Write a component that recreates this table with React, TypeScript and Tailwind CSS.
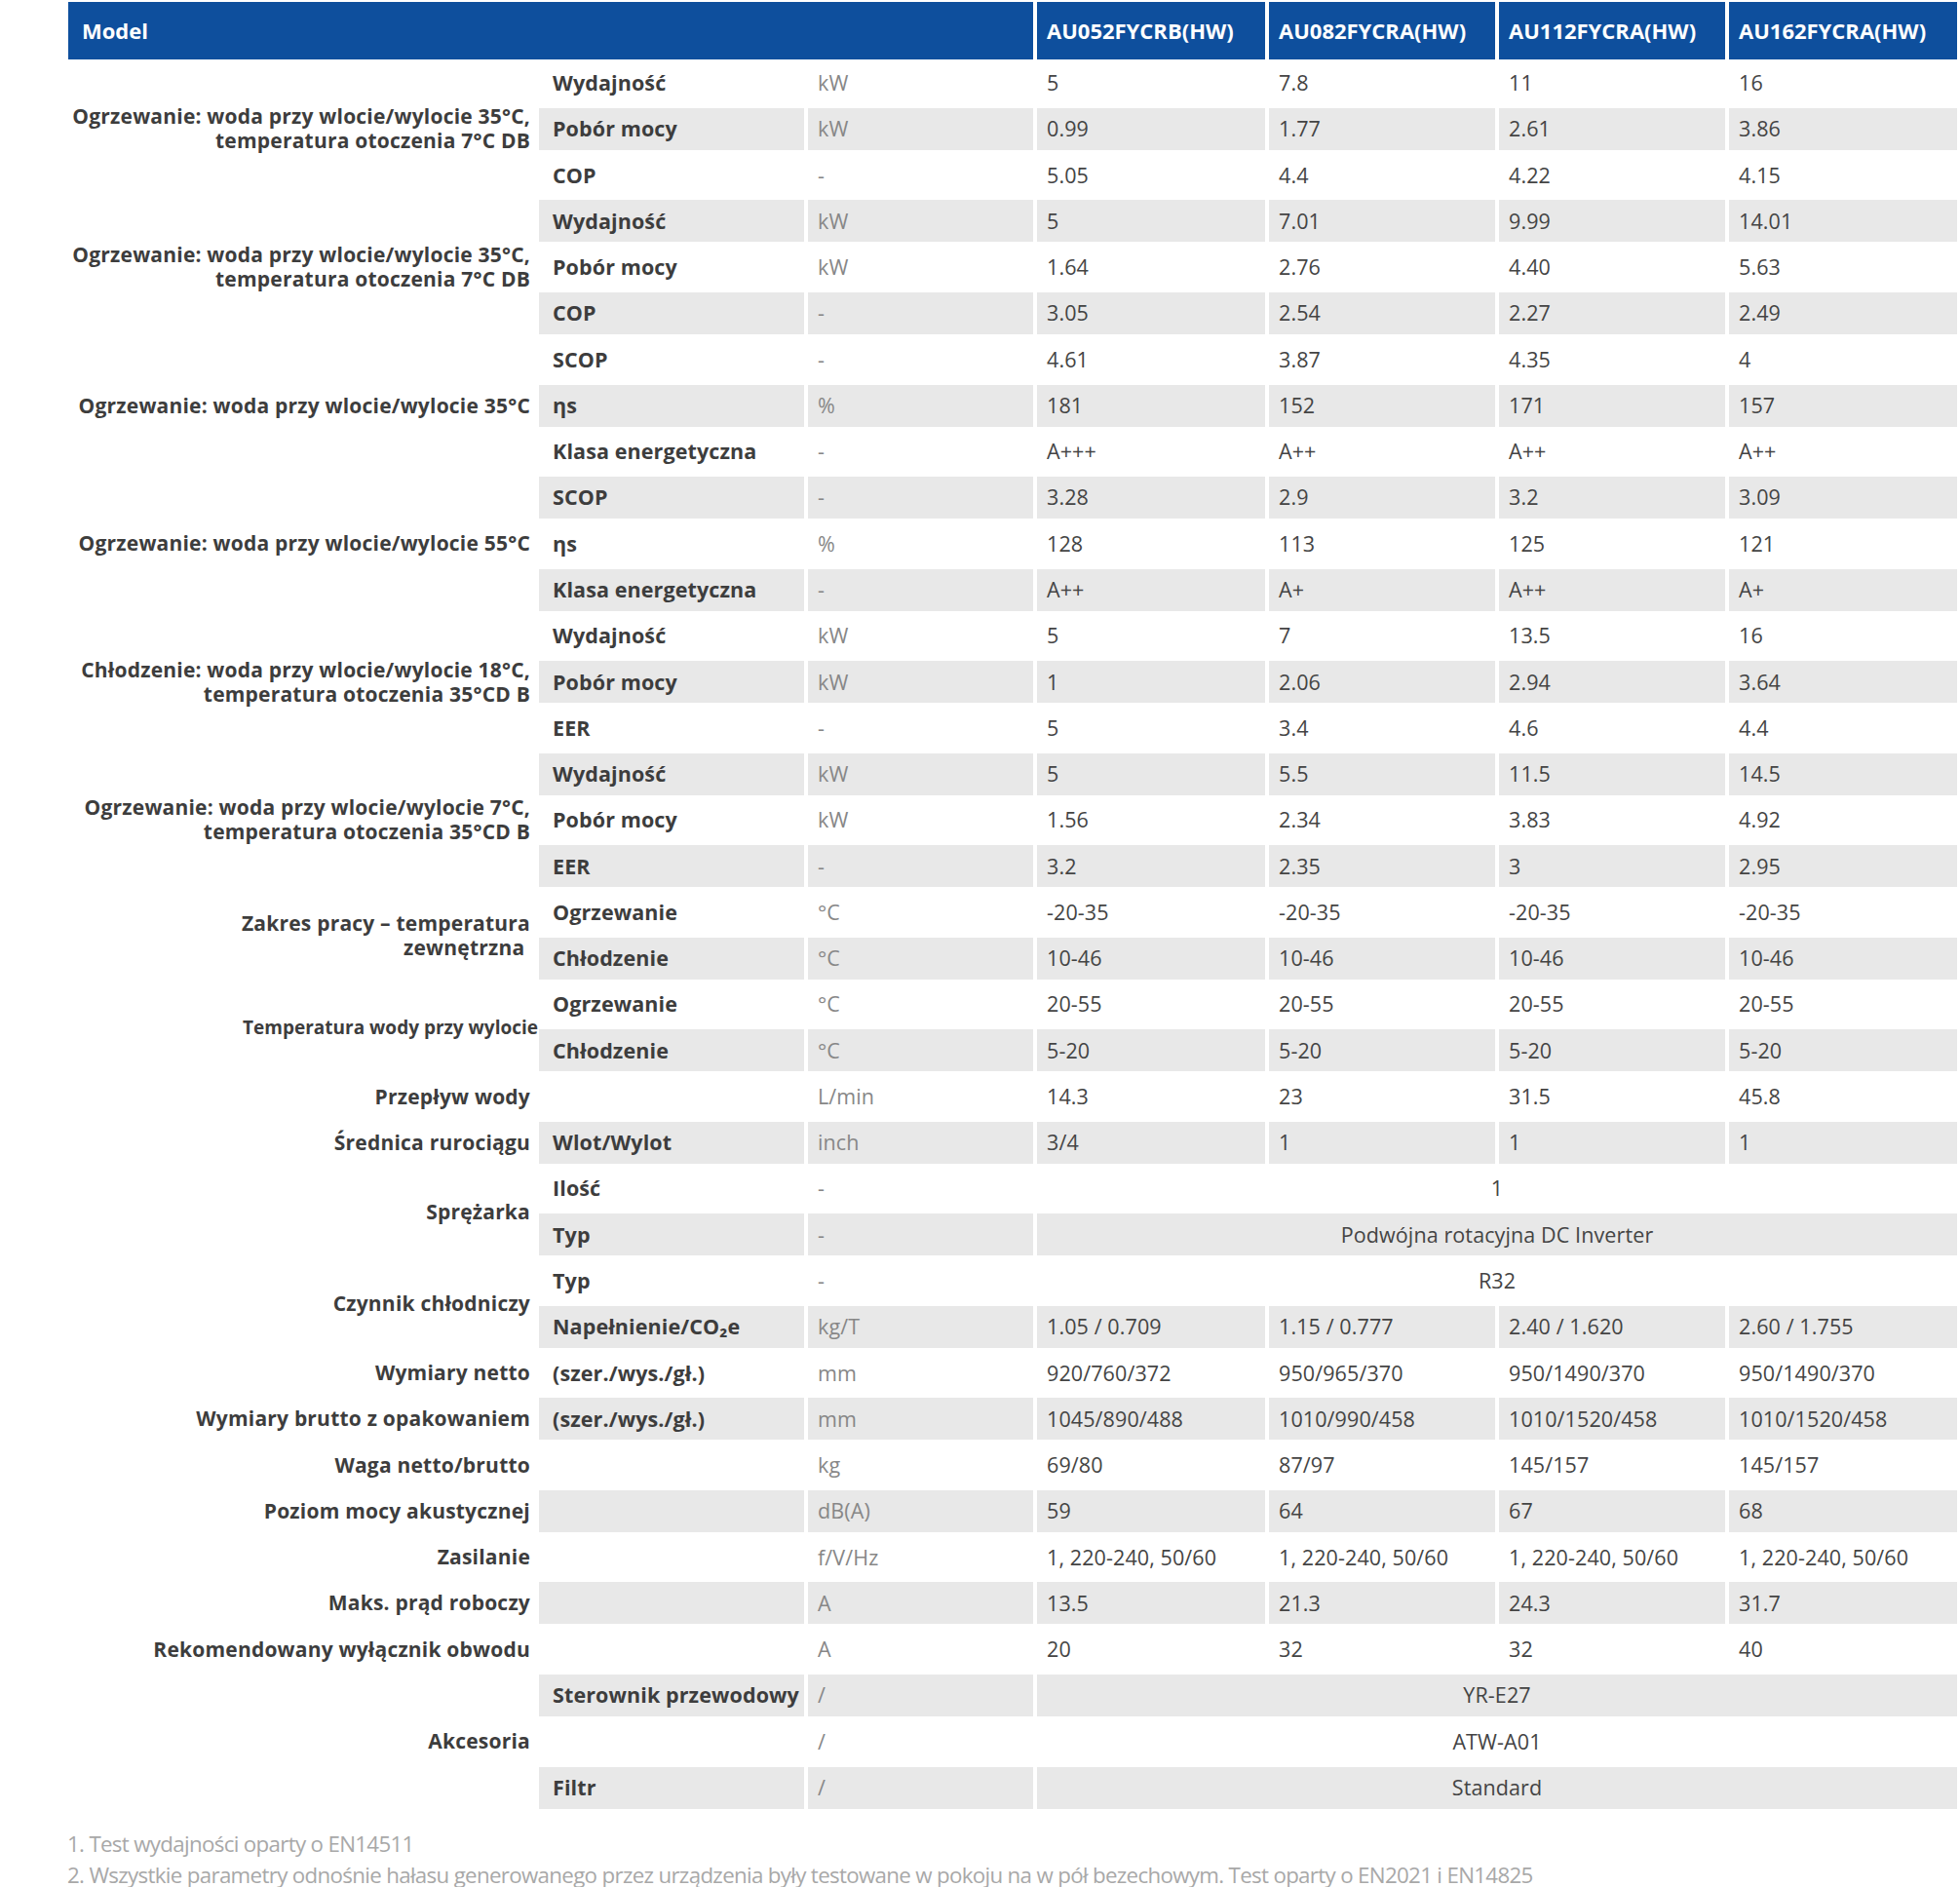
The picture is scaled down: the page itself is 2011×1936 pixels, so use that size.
import type { ReactNode } from "react";

type Row = {
  param: string;
  unit: string;
  values: string[] | string;
};

type Group = {
  label: ReactNode;
  small?: boolean;
  rows: Row[];
};

const models = ["AU052FYCRB(HW)", "AU082FYCRA(HW)", "AU112FYCRA(HW)", "AU162FYCRA(HW)"];

const heat35 = (
  <>
    Ogrzewanie: woda przy wlocie/wylocie 35°C,
    <br />
    temperatura otoczenia 7°C DB
  </>
);

const groups: Group[] = [
  {
    label: heat35,
    rows: [
      { param: "Wydajność", unit: "kW", values: ["5", "7.8", "11", "16"] },
      { param: "Pobór mocy", unit: "kW", values: ["0.99", "1.77", "2.61", "3.86"] },
      { param: "COP", unit: "-", values: ["5.05", "4.4", "4.22", "4.15"] },
    ],
  },
  {
    label: heat35,
    rows: [
      { param: "Wydajność", unit: "kW", values: ["5", "7.01", "9.99", "14.01"] },
      { param: "Pobór mocy", unit: "kW", values: ["1.64", "2.76", "4.40", "5.63"] },
      { param: "COP", unit: "-", values: ["3.05", "2.54", "2.27", "2.49"] },
    ],
  },
  {
    label: "Ogrzewanie: woda przy wlocie/wylocie 35°C",
    rows: [
      { param: "SCOP", unit: "-", values: ["4.61", "3.87", "4.35", "4"] },
      { param: "ηs", unit: "%", values: ["181", "152", "171", "157"] },
      { param: "Klasa energetyczna", unit: "-", values: ["A+++", "A++", "A++", "A++"] },
    ],
  },
  {
    label: "Ogrzewanie: woda przy wlocie/wylocie 55°C",
    rows: [
      { param: "SCOP", unit: "-", values: ["3.28", "2.9", "3.2", "3.09"] },
      { param: "ηs", unit: "%", values: ["128", "113", "125", "121"] },
      { param: "Klasa energetyczna", unit: "-", values: ["A++", "A+", "A++", "A+"] },
    ],
  },
  {
    label: (
      <>
        Chłodzenie: woda przy wlocie/wylocie 18°C,
        <br />
        temperatura otoczenia 35°CD B
      </>
    ),
    rows: [
      { param: "Wydajność", unit: "kW", values: ["5", "7", "13.5", "16"] },
      { param: "Pobór mocy", unit: "kW", values: ["1", "2.06", "2.94", "3.64"] },
      { param: "EER", unit: "-", values: ["5", "3.4", "4.6", "4.4"] },
    ],
  },
  {
    label: (
      <>
        Ogrzewanie: woda przy wlocie/wylocie 7°C,
        <br />
        temperatura otoczenia 35°CD B
      </>
    ),
    rows: [
      { param: "Wydajność", unit: "kW", values: ["5", "5.5", "11.5", "14.5"] },
      { param: "Pobór mocy", unit: "kW", values: ["1.56", "2.34", "3.83", "4.92"] },
      { param: "EER", unit: "-", values: ["3.2", "2.35", "3", "2.95"] },
    ],
  },
  {
    label: (
      <>
        Zakres pracy – temperatura
        <br />
        zewnętrzna&nbsp;
      </>
    ),
    rows: [
      { param: "Ogrzewanie", unit: "°C", values: ["-20-35", "-20-35", "-20-35", "-20-35"] },
      { param: "Chłodzenie", unit: "°C", values: ["10-46", "10-46", "10-46", "10-46"] },
    ],
  },
  {
    label: "Temperatura wody przy wylocie",
    small: true,
    rows: [
      { param: "Ogrzewanie", unit: "°C", values: ["20-55", "20-55", "20-55", "20-55"] },
      { param: "Chłodzenie", unit: "°C", values: ["5-20", "5-20", "5-20", "5-20"] },
    ],
  },
  {
    label: "Przepływ wody",
    rows: [{ param: "", unit: "L/min", values: ["14.3", "23", "31.5", "45.8"] }],
  },
  {
    label: "Średnica rurociągu",
    rows: [{ param: "Wlot/Wylot", unit: "inch", values: ["3/4", "1", "1", "1"] }],
  },
  {
    label: "Sprężarka",
    rows: [
      { param: "Ilość", unit: "-", values: "1" },
      { param: "Typ", unit: "-", values: "Podwójna rotacyjna DC Inverter" },
    ],
  },
  {
    label: "Czynnik chłodniczy",
    rows: [
      { param: "Typ", unit: "-", values: "R32" },
      {
        param: "Napełnienie/CO₂e",
        unit: "kg/T",
        values: ["1.05 / 0.709", "1.15 / 0.777", "2.40 / 1.620", "2.60 / 1.755"],
      },
    ],
  },
  {
    label: "Wymiary netto",
    rows: [
      {
        param: "(szer./wys./gł.)",
        unit: "mm",
        values: ["920/760/372", "950/965/370", "950/1490/370", "950/1490/370"],
      },
    ],
  },
  {
    label: "Wymiary brutto z opakowaniem",
    rows: [
      {
        param: "(szer./wys./gł.)",
        unit: "mm",
        values: ["1045/890/488", "1010/990/458", "1010/1520/458", "1010/1520/458"],
      },
    ],
  },
  {
    label: "Waga netto/brutto",
    rows: [{ param: "", unit: "kg", values: ["69/80", "87/97", "145/157", "145/157"] }],
  },
  {
    label: "Poziom mocy akustycznej",
    rows: [{ param: "", unit: "dB(A)", values: ["59", "64", "67", "68"] }],
  },
  {
    label: "Zasilanie",
    rows: [
      {
        param: "",
        unit: "f/V/Hz",
        values: ["1, 220-240, 50/60", "1, 220-240, 50/60", "1, 220-240, 50/60", "1, 220-240, 50/60"],
      },
    ],
  },
  {
    label: "Maks. prąd roboczy",
    rows: [{ param: "", unit: "A", values: ["13.5", "21.3", "24.3", "31.7"] }],
  },
  {
    label: "Rekomendowany wyłącznik obwodu",
    rows: [{ param: "", unit: "A", values: ["20", "32", "32", "40"] }],
  },
  {
    label: "Akcesoria",
    rows: [
      { param: "Sterownik przewodowy", unit: "/", values: "YR-E27" },
      { param: "", unit: "/", values: "ATW-A01" },
      { param: "Filtr", unit: "/", values: "Standard" },
    ],
  },
];

const spans: Record<number, string> = {
  1: "row-span-1",
  2: "row-span-2",
  3: "row-span-3",
};

const cols = "grid grid-cols-[479px_272px_231px_234px_232px_232px_234px] gap-x-[4px]";

export default function App() {
  let rowIndex = 0;
  const cells: ReactNode[] = [];

  groups.forEach((g, gi) => {
    cells.push(
      <div
        key={`g${gi}`}
        className={`${spans[g.rows.length]} col-start-1 flex items-center justify-end text-right font-bold text-[#3d3d3d] ${
          g.small
            ? "text-[19px] leading-[24px] -mr-[3px] tracking-normal"
            : "text-[21px] leading-[25px] pr-[5px] tracking-[0.01em]"
        }`}
      >
        <div>{g.label}</div>
      </div>
    );
    g.rows.forEach((r, ri) => {
      const gray = rowIndex % 2 === 1;
      const bg = gray ? "bg-[#e8e8e8]" : "";
      cells.push(
        <div key={`p${gi}-${ri}`} className={`col-start-2 flex items-center pl-[14px] font-bold text-[#3d3d3d] ${bg}`}>
          {r.param}
        </div>
      );
      cells.push(
        <div key={`u${gi}-${ri}`} className={`flex items-center pl-[10px] text-[#878787] ${bg}`}>
          {r.unit}
        </div>
      );
      if (typeof r.values === "string") {
        cells.push(
          <div key={`m${gi}-${ri}`} className={`col-span-4 flex items-center justify-center text-[#444] ${bg}`}>
            {r.values}
          </div>
        );
      } else {
        r.values.forEach((v, vi) => {
          cells.push(
            <div key={`v${gi}-${ri}-${vi}`} className={`flex items-center pl-[10px] text-[#444] ${bg}`}>
              {v}
            </div>
          );
        });
      }
      rowIndex++;
    });
  });

  return (
    <div className="w-[2011px] min-h-[1936px] bg-white font-['Open_Sans',sans-serif]">
      <div className="pl-[70px]">
        <div className={`${cols} mt-[2px] h-[59px] text-[22px] font-bold text-white`}>
          <div className="col-span-3 flex items-center pl-[14px] bg-[#0e4f9d]">Model</div>
          {models.map((m) => (
            <div key={m} className="flex items-center pl-[10px] bg-[#0e4f9d]">
              {m}
            </div>
          ))}
        </div>
        <div
          className={`${cols} mt-[2.7px] auto-rows-[43px] gap-y-[4.27px] text-[21.5px] tracking-[0.005em]`}
        >
          {cells}
        </div>
      </div>
      <div className="mt-[20px] pl-[69px] text-[22.3px] leading-[32px] text-[#a8a8a8] tracking-[-0.03em]">
        <p>1. Test wydajności oparty o EN14511</p>
        <p>
          2. Wszystkie parametry odnośnie hałasu generowanego przez urządzenia były testowane w pokoju na w pół
          bezechowym. Test oparty o EN2021 i EN14825
        </p>
      </div>
    </div>
  );
}
